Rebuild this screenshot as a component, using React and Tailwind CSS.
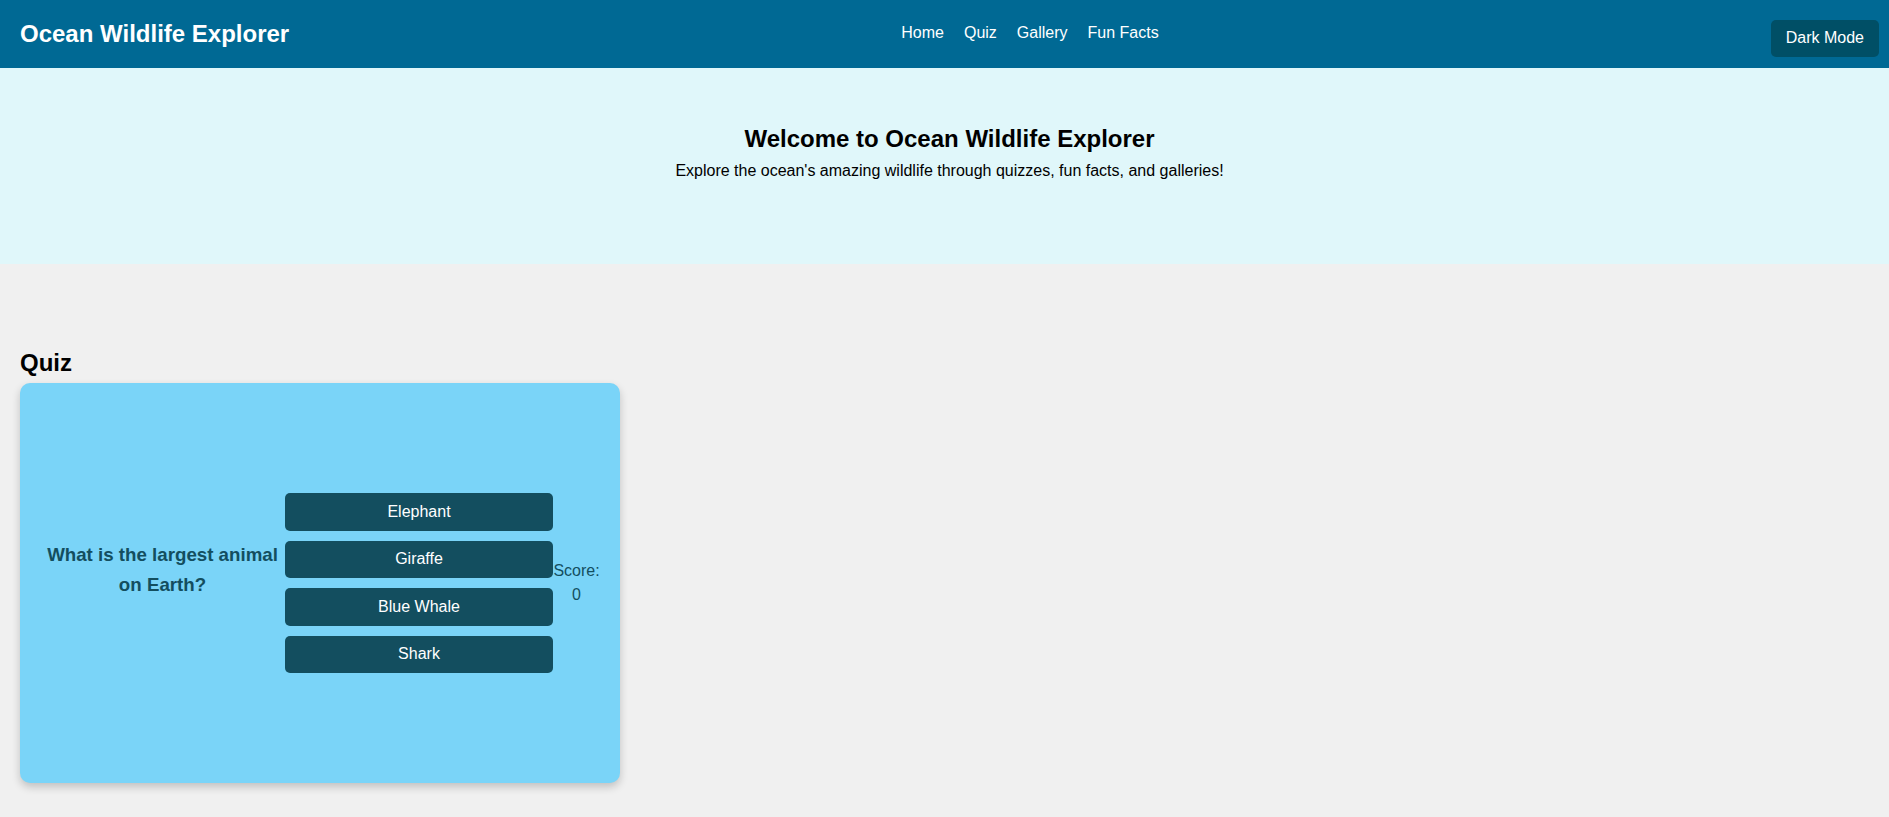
import React from "react";

export default function App() {
  const options = ["Elephant", "Giraffe", "Blue Whale", "Shark"];
  return (
    <div className="min-h-screen bg-[#f0f0f0] font-['Liberation_Sans',Arial,sans-serif] text-black">
      <header className="flex h-[68px] items-center justify-between bg-[#006994] pl-5 pr-[10px] text-white">
        <h1 className="text-[24px] font-bold leading-[28px]">Ocean Wildlife Explorer</h1>
        <nav className="-mt-[2px] flex gap-5 text-[16px] leading-[20px]">
          <a href="#">Home</a>
          <a href="#">Quiz</a>
          <a href="#">Gallery</a>
          <a href="#">Fun Facts</a>
        </nav>
        <button className="mt-[8px] h-[37px] rounded-[5px] bg-[#004f66] px-[15px] text-[16px] leading-none text-white">
          Dark Mode
        </button>
      </header>

      <section className="h-[196px] bg-[#e0f7fa] pl-[10px] pt-[52px] text-center">
        <h2 className="text-[24px] font-bold leading-[38.4px]">Welcome to Ocean Wildlife Explorer</h2>
        <p className="text-[16px] leading-[25.6px]">
          Explore the ocean's amazing wildlife through quizzes, fun facts, and galleries!
        </p>
      </section>

      <main className="px-5 pt-[79px]">
        <h2 className="text-[24px] font-bold leading-[40px]">Quiz</h2>
        <div className="flex h-[400px] w-[600px] items-center rounded-[10px] bg-[#7ad4f8] p-5 shadow-[0_4px_8px_rgba(0,0,0,0.2)]">
          <h3 className="mb-[26px] w-[245px] shrink-0 text-center text-[18.72px] font-bold leading-[30px] text-[#134e5f]">
            What is the largest animal on Earth?
          </h3>
          <div className="flex w-[268px] shrink-0 flex-col gap-[10px]">
            {options.map((o) => (
              <button
                key={o}
                className="h-[37.5px] w-full rounded-[5px] bg-[#134e5f] text-[16px] leading-none text-white"
              >
                {o}
              </button>
            ))}
          </div>
          <div className="w-[47px] shrink-0 text-center text-[16px] leading-[24px] text-[#134e5f]">
            Score: 0
          </div>
        </div>
      </main>
    </div>
  );
}
